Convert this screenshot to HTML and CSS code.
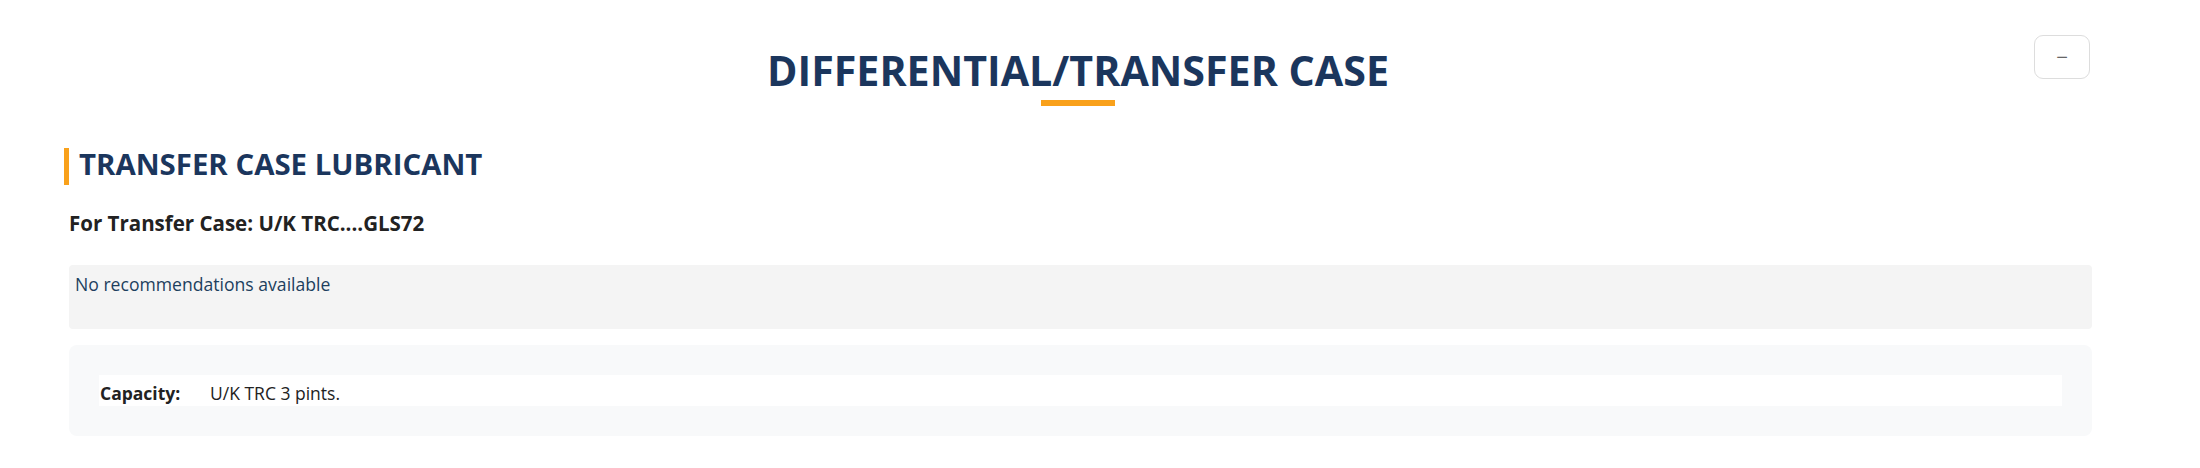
FILE: index.html
```html
<!DOCTYPE html>
<html lang="en">

<head>
  <meta charset="UTF-8">
  <title>Differential/Transfer Case</title>
  <link rel="stylesheet" href="styles.css">
</head>

<body>
  <div class="container">

    <div class="header">
      <h1 class="page-title">DIFFERENTIAL/TRANSFER CASE</h1>
      <button class="collapse-btn" title="Collapse">&minus;</button>
    </div>

    <div class="section">
      <h2>TRANSFER CASE LUBRICANT</h2>
      <div class="section-body">
        <h3>For Transfer Case: U/K TRC....GLS72</h3>
        <div class="recommendations">No recommendations available</div>
        <div class="specs">
          <table>
            <tr>
              <th>Capacity:</th>
              <td>U/K TRC 3 pints.</td>
            </tr>
          </table>
        </div>
      </div>
    </div>

  </div>
</body>

</html>
```

FILE: styles.css
```css
body {
  font-family: "Open Sans", Arial, sans-serif;
  margin: 0;
  background: #fff;
  color: #222;
}

.container {
  padding: 35px 108px 30px 64px;
}

.header {
  display: grid;
  grid-template-columns: 1fr auto 1fr;
  align-items: start;
}

.page-title {
  grid-column: 2;
  margin: 7px 0 0;
  text-align: center;
  font-size: 41.2px;
  line-height: 57px;
  font-weight: 700;
  color: #1b365d;
}

.page-title::after {
  content: "";
  display: block;
  width: 74px;
  height: 6px;
  margin: 1px auto 0;
  background: #f9a11b;
}

.collapse-btn {
  grid-column: 3;
  justify-self: end;
  width: 56px;
  height: 44px;
  margin-right: 2px;
  border: 1.5px solid #ddd;
  border-radius: 9px;
  background: #fff;
  color: #666;
  font-size: 20px;
  cursor: pointer;
}

.section h2 {
  margin: 42px 0 0;
  padding: 0 0 4px 10px;
  border-left: 5px solid #f9a11b;
  font-size: 29.4px;
  line-height: 33px;
  font-weight: 700;
  color: #1b365d;
}

.section-body {
  margin-left: 5px;
}

.section h3 {
  margin: 24px 0 0;
  font-size: 20.5px;
  font-weight: 700;
  color: #222;
}

.recommendations {
  margin-top: 28px;
  height: 64px;
  box-sizing: border-box;
  padding: 7px 6px;
  background: #f4f4f4;
  border-radius: 4px;
  font-size: 17.6px;
  line-height: 24px;
  color: #1d3f5e;
}

.specs {
  margin-top: 16px;
  padding: 30px;
  background: #f8f9fa;
  border-radius: 8px;
}

.specs table {
  width: 100%;
  border-collapse: collapse;
  background: #fff;
  font-size: 17.5px;
  line-height: 24px;
}

.specs th,
.specs td {
  padding: 6px 0 1px;
  text-align: left;
  vertical-align: top;
}

.specs th {
  width: 110px;
  padding-left: 1px;
  font-weight: 700;
}

.specs td {
  font-weight: 400;
}
```
